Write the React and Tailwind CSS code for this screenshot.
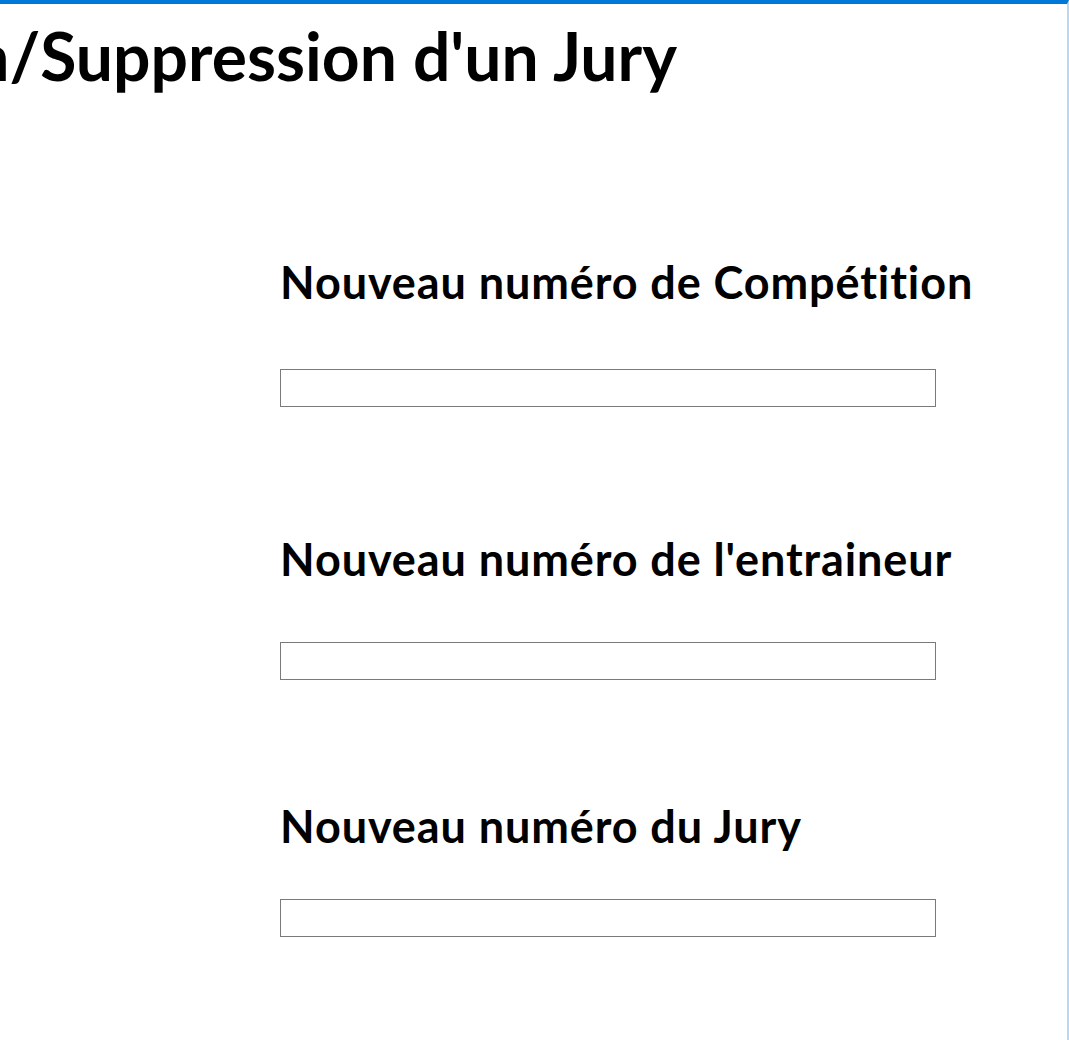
import React from 'react';

const font = { fontFamily: 'Lato, "Open Sans", sans-serif' };

const labelClass = 'text-[45px] leading-none font-bold whitespace-nowrap tracking-[0.9px] [font-variant-ligatures:none]';
const inputClass = 'w-[656px] h-[38px] border border-[#7a7a7a] bg-white outline-none';

const App = () => {
  return (
    <div
      className="w-[1069px] h-[1040px] bg-white border-t-4 border-t-[#0078d7] border-r-2 border-r-[#b9d6f2] flex flex-col overflow-hidden text-black"
      style={font}
    >
      {/* Title, cut off on the left like the original window */}
      <div className="mt-[19px] pb-[20px] w-[677px] overflow-hidden flex justify-end">
        <h1 className="whitespace-nowrap text-[66px] leading-none font-bold [font-variant-ligatures:none]">
          Création/Suppression d'un Jury
        </h1>
      </div>

      <div className="pl-[280px] flex flex-col">
        <label className={`mt-[151px] ${labelClass}`}>Nouveau numéro de Compétition</label>
        <input type="text" className={`mt-[64px] ${inputClass}`} />

        <label className={`mt-[130px] ${labelClass}`}>Nouveau numéro de l'entraineur</label>
        <input type="text" className={`mt-[60px] ${inputClass}`} />

        <label className={`mt-[124px] ${labelClass}`}>Nouveau numéro du Jury</label>
        <input type="text" className={`mt-[50px] ${inputClass}`} />
      </div>
    </div>
  );
};

export default App;
